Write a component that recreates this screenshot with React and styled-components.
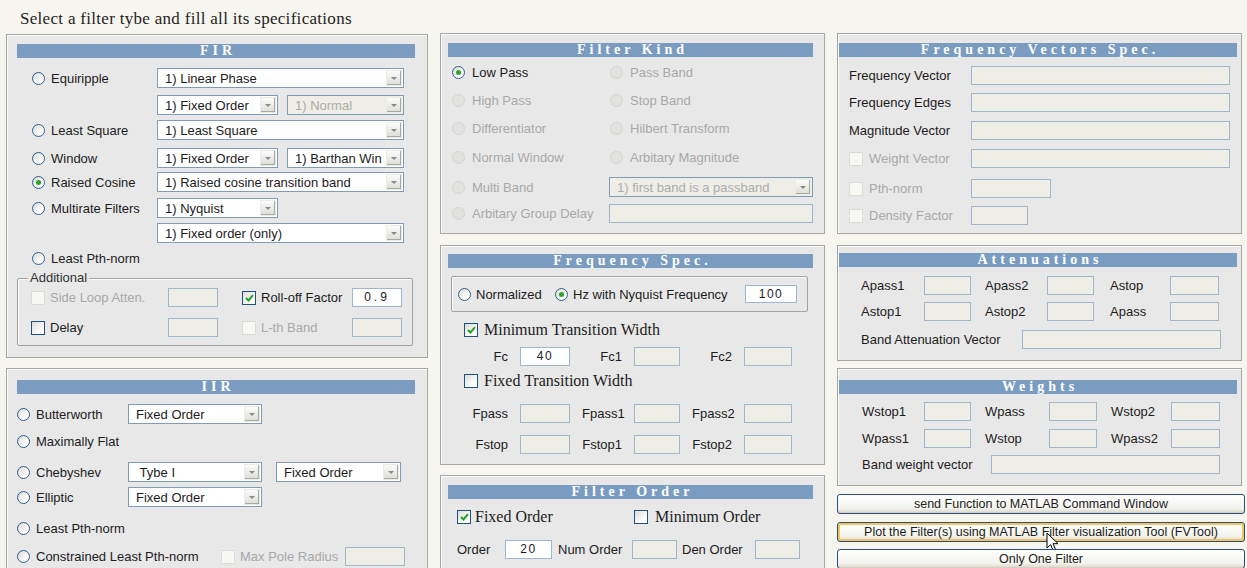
import React from "react";
import styled, { createGlobalStyle } from "styled-components";

const GlobalStyle = createGlobalStyle`
  html, body {
    margin: 0;
    padding: 0;
    background: #f7f5ef;
  }
  body {
    font-family: "Liberation Sans", Arial, sans-serif;
    font-size: 13px;
    color: #1c1c1c;
    overflow: hidden;
  }
  * {
    box-sizing: border-box;
  }
`;

const Page = styled.div`
  width: 1247px;
  height: 568px;
  padding-left: 6px;
  overflow: hidden;
`;

const Title = styled.h1`
  margin: 0;
  height: 33px;
  padding: 9px 0 0 14px;
  font: normal 17px/19px "Liberation Serif", "Times New Roman", serif;
  letter-spacing: 0.3px;
  color: #1e1e1e;
`;

const Columns = styled.div`
  display: grid;
  grid-template-columns: 422px 385px 408px;
  column-gap: 12px;
  align-items: start;
`;

const Column = styled.div`
  display: flex;
  flex-direction: column;
`;

const Panel = styled.section`
  flex: none;
  width: ${(p) => p.$w || "100%"};
  height: ${(p) => p.$h}px;
  margin-top: ${(p) => p.$mt || 0}px;
  padding: ${(p) => p.$pad};
  background: #e8e8e8;
  border: 1px solid #a6a6a6;
  box-shadow: inset 1px 1px 0 #fbfbfb;
  display: flex;
  flex-direction: column;
`;

const Header = styled.h2`
  flex: none;
  margin: 0;
  height: 14px;
  background: #7b9cc1;
  color: #fff;
  font: bold 14px/14px "Liberation Serif", "Times New Roman", serif;
  letter-spacing: 4px;
  padding-left: 4px;
  text-align: center;
  white-space: nowrap;
  overflow: hidden;
`;

const Row = styled.div`
  flex: none;
  display: flex;
  align-items: center;
  height: ${(p) => p.$h || 20}px;
  margin-top: ${(p) => p.$mt || 0}px;
  margin-left: ${(p) => p.$ml || 0}px;
`;

const Cell = styled.div`
  flex: none;
  display: flex;
  align-items: center;
  gap: ${(p) => p.$gap ?? 6}px;
  width: ${(p) => (p.$w ? `${p.$w}px` : "auto")};
  padding-left: ${(p) => p.$pl || 0}px;
`;

const FieldGrid = styled.div`
  flex: none;
  display: grid;
  grid-template-columns: 60px 50px 40px 46px 40px 48px;
  column-gap: 12px;
  align-items: center;
  height: 19px;
  margin-top: ${(p) => p.$mt || 0}px;
`;

const Label = styled.span`
  white-space: nowrap;
  color: ${(p) => (p.$off ? "#a9a9a9" : "#1c1c1c")};
  text-align: ${(p) => (p.$end ? "right" : "left")};
  font-family: ${(p) =>
    p.$serif ? '"Liberation Serif", "Times New Roman", serif' : "inherit"};
  font-size: ${(p) => (p.$serif ? "16px" : "inherit")};
`;

const Radio = styled.span`
  flex: none;
  width: 13px;
  height: 13px;
  border-radius: 50%;
  border: 1px solid ${(p) => (p.$off ? "#d3d3cf" : "#2f5f92")};
  background: ${(p) =>
    p.$off ? "#e2e2e0" : "linear-gradient(135deg, #d8d8d2, #ffffff 70%)"};
  display: flex;
  align-items: center;
  justify-content: center;

  &::after {
    content: "";
    width: 5px;
    height: 5px;
    border-radius: 50%;
    background: ${(p) => (p.$on ? "#2aa52a" : "transparent")};
  }
`;

const Box = styled.span`
  flex: none;
  width: 14px;
  height: 14px;
  border: 1px solid ${(p) => (p.$off ? "#dcdcd6" : "#1c5180")};
  background: ${(p) =>
    p.$off ? "#f7f7f4" : "linear-gradient(135deg, #dcdcd7, #ffffff 75%)"};
  display: flex;
  align-items: center;
  justify-content: center;
`;

const Select = styled.div`
  flex: none;
  width: ${(p) => p.$w}px;
  height: 20px;
  margin-left: ${(p) => p.$ml || 0}px;
  display: flex;
  align-items: center;
  border: 1px solid #7f9db9;
  background: ${(p) => (p.$off ? "#eeede6" : "#fff")};
  color: ${(p) => (p.$off ? "#acacac" : "#1c1c1c")};
  padding: 1px 1px 1px 7px;
`;

const SelectText = styled.span`
  flex: 1;
  white-space: nowrap;
  overflow: hidden;
`;

const SelectArrow = styled.span`
  flex: none;
  width: 16px;
  height: 100%;
  display: flex;
  align-items: center;
  justify-content: center;
  background: linear-gradient(#fbfbf9, #deded7);
  border: 1px solid #ecece7;
  box-shadow: inset -1px -1px 0 #a9a9a3;

  &::after {
    content: "";
    border: 3px solid transparent;
    border-top-color: #8a8a8a;
    border-bottom: 0;
  }
`;

const Field = styled.div`
  flex: none;
  width: ${(p) => p.$w}px;
  height: ${(p) => p.$h || 19}px;
  margin-left: ${(p) => p.$ml || 0}px;
  border: 1px solid #9fb5d0;
  background: ${(p) => (p.$on ? "#fff" : "#eeede6")};
  font-size: 12px;
  line-height: 17px;
  text-align: center;
  letter-spacing: ${(p) => p.$ls ?? 1.5}px;
  color: #1c1c1c;
`;

const Group = styled.div`
  flex: none;
  width: ${(p) => p.$w}px;
  height: ${(p) => p.$h}px;
  margin-top: ${(p) => p.$mt || 0}px;
  margin-left: ${(p) => p.$ml || 0}px;
  border: 1px solid #a2a2a2;
  border-radius: 2px;
  box-shadow: inset 1px 1px 0 #fafafa;
  display: flex;
  flex-direction: column;
`;

const Legend = styled.span`
  align-self: flex-start;
  margin: -9px 0 0 10px;
  padding: 0 2px;
  background: #e8e8e8;
  line-height: 16px;
  color: #333;
`;

const Button = styled.button`
  position: relative;
  flex: none;
  display: block;
  width: 100%;
  height: 20px;
  margin-top: ${(p) => p.$mt || 0}px;
  padding: 0;
  border: 1px solid #2a4f7c;
  border-radius: 3px;
  background: linear-gradient(#ffffff, #f2f2ec 75%, #d9d4c8);
  box-shadow: ${(p) =>
    p.$hot ? "inset 0 0 0 2px #f4c35a" : "inset 0 -1px 0 #d6d0c5"};
  font: 12.5px "Liberation Sans", Arial, sans-serif;
  color: #1c1c1c;
`;

const Pointer = styled.svg`
  position: absolute;
  left: 208px;
  top: 9px;
`;

function Tick({ on, off }) {
  return (
    <Box $off={off}>
      {on && (
        <svg width="9" height="8" viewBox="0 0 9 8">
          <path d="M1 4l2.5 2.5L8 1.2" fill="none" stroke="#21a121" strokeWidth="2" />
        </svg>
      )}
    </Box>
  );
}

function Opt({ w, pl, gap, on, off, children }) {
  return (
    <Cell $w={w} $pl={pl} $gap={gap ?? 6}>
      <Radio $on={on} $off={off} />
      <Label $off={off}>{children}</Label>
    </Cell>
  );
}

function CheckOpt({ w, pl, gap, on, off, serif, children }) {
  return (
    <Cell $w={w} $pl={pl} $gap={gap ?? 5}>
      <Tick on={on} off={off} />
      <Label $off={off} $serif={serif}>
        {children}
      </Label>
    </Cell>
  );
}

function Drop({ w, ml, off, children }) {
  return (
    <Select $w={w} $ml={ml} $off={off}>
      <SelectText>{children}</SelectText>
      <SelectArrow />
    </Select>
  );
}

function Text({ w, pl, off, children }) {
  return (
    <Cell $w={w} $pl={pl}>
      <Label $off={off}>{children}</Label>
    </Cell>
  );
}

function FirPanel() {
  return (
    <Panel $h={324} $mt={1} $pad="9px 12px 0 10px">
      <Header>FIR</Header>
      <Row $mt={10}>
        <Opt w={140} pl={15}>Equiripple</Opt>
        <Drop w={247}>1) Linear Phase</Drop>
      </Row>
      <Row $mt={7}>
        <Cell $w={140} />
        <Drop w={121}>1) Fixed Order</Drop>
        <Drop w={117} ml={9} off>
          1) Normal
        </Drop>
      </Row>
      <Row $mt={5}>
        <Opt w={140} pl={15}>Least Square</Opt>
        <Drop w={247}>1) Least Square</Drop>
      </Row>
      <Row $mt={8}>
        <Opt w={140} pl={15}>Window</Opt>
        <Drop w={121}>1) Fixed Order</Drop>
        <Drop w={117} ml={9}>
          1) Barthan Win
        </Drop>
      </Row>
      <Row $mt={4}>
        <Opt w={140} pl={15} on>
          Raised Cosine
        </Opt>
        <Drop w={247}>1) Raised cosine transition band</Drop>
      </Row>
      <Row $mt={6}>
        <Opt w={140} pl={15}>Multirate Filters</Opt>
        <Drop w={121}>1) Nyquist</Drop>
      </Row>
      <Row $mt={5}>
        <Cell $w={140} />
        <Drop w={247}>1) Fixed order (only)</Drop>
      </Row>
      <Row $mt={5}>
        <Opt w={140} pl={15}>Least Pth-norm</Opt>
      </Row>
      <Group $w={396} $h={68} $mt={10}>
        <Legend>Additional</Legend>
        <Row $h={19} $mt={2}>
          <CheckOpt w={150} pl={13} off>
            Side Loop Atten.
          </CheckOpt>
          <Field $w={50} />
          <CheckOpt w={134} pl={24} on>
            Roll-off Factor
          </CheckOpt>
          <Field $w={50} $on $ls={3}>
            0.9
          </Field>
        </Row>
        <Row $h={19} $mt={11}>
          <CheckOpt w={150} pl={13}>
            Delay
          </CheckOpt>
          <Field $w={50} />
          <CheckOpt w={134} pl={24} off>
            L-th Band
          </CheckOpt>
          <Field $w={50} />
        </Row>
      </Group>
    </Panel>
  );
}

function IirPanel() {
  return (
    <Panel $h={210} $mt={10} $pad="11px 12px 0 10px">
      <Header>IIR</Header>
      <Row $mt={10}>
        <Opt w={111}>Butterworth</Opt>
        <Drop w={134}>Fixed Order</Drop>
      </Row>
      <Row $mt={7}>
        <Opt w={111}>Maximally Flat</Opt>
      </Row>
      <Row $mt={11}>
        <Opt w={111}>Chebyshev</Opt>
        <Drop w={134}>&nbsp;Tybe I</Drop>
        <Drop w={125} ml={14}>
          Fixed Order
        </Drop>
      </Row>
      <Row $mt={5}>
        <Opt w={111}>Elliptic</Opt>
        <Drop w={134}>Fixed Order</Drop>
      </Row>
      <Row $mt={11}>
        <Opt w={111}>Least Pth-norm</Opt>
      </Row>
      <Row $mt={9} $h={19}>
        <Opt w={204}>Constrained Least Pth-norm</Opt>
        <CheckOpt w={124} off>
          Max Pole Radius
        </CheckOpt>
        <Field $w={60} />
      </Row>
    </Panel>
  );
}

function KindPanel() {
  return (
    <Panel $h={201} $pad="9px 11px 0 7px">
      <Header>Filter Kind</Header>
      <Row $mt={5}>
        <Opt w={162} pl={4} gap={7} on>
          Low Pass
        </Opt>
        <Opt gap={7} off>
          Pass Band
        </Opt>
      </Row>
      <Row $mt={8}>
        <Opt w={162} pl={4} gap={7} off>
          High Pass
        </Opt>
        <Opt gap={7} off>
          Stop Band
        </Opt>
      </Row>
      <Row $mt={8}>
        <Opt w={162} pl={4} gap={7} off>
          Differentiator
        </Opt>
        <Opt gap={7} off>
          Hilbert Transform
        </Opt>
      </Row>
      <Row $mt={9}>
        <Opt w={162} pl={4} gap={7} off>
          Normal Window
        </Opt>
        <Opt gap={7} off>
          Arbitary Magnitude
        </Opt>
      </Row>
      <Row $mt={10}>
        <Opt w={161} pl={4} gap={7} off>
          Multi Band
        </Opt>
        <Drop w={204} off>
          1) first band is a passband
        </Drop>
      </Row>
      <Row $mt={7} $h={19}>
        <Opt w={161} pl={4} gap={7} off>
          Arbitary Group Delay
        </Opt>
        <Field $w={204} />
      </Row>
    </Panel>
  );
}

function FreqRow({ mt, names, first }) {
  return (
    <FieldGrid $mt={mt}>
      {names.map((n, i) => (
        <React.Fragment key={n}>
          <Label $end>{n}</Label>
          {i === 0 && first ? (
            <Field $w={50} $on>
              {first}
            </Field>
          ) : (
            <Field $w={i === 0 ? 50 : i === 1 ? 46 : 48} />
          )}
        </React.Fragment>
      ))}
    </FieldGrid>
  );
}

function SpecPanel() {
  return (
    <Panel $h={220} $mt={11} $pad="8px 11px 0 7px">
      <Header>Frequency Spec.</Header>
      <Group $w={357} $h={36} $mt={8} $ml={3}>
        <Row $h={34}>
          <Opt w={101} pl={6} gap={5}>
            Normalized
          </Opt>
          <Opt w={192} pl={2} gap={5} on>
            Hz with Nyquist Frequency
          </Opt>
          <Field $w={52} $h={18} $on>
            100
          </Field>
        </Row>
      </Group>
      <Row $mt={8}>
        <CheckOpt pl={16} gap={6} on serif>
          Minimum Transition Width
        </CheckOpt>
      </Row>
      <FreqRow mt={7} names={["Fc", "Fc1", "Fc2"]} first="40" />
      <Row $mt={5}>
        <CheckOpt pl={16} gap={6} serif>
          Fixed Transition Width
        </CheckOpt>
      </Row>
      <FreqRow mt={13} names={["Fpass", "Fpass1", "Fpass2"]} />
      <FreqRow mt={12} names={["Fstop", "Fstop1", "Fstop2"]} />
    </Panel>
  );
}

function OrderPanel() {
  return (
    <Panel $h={100} $mt={10} $pad="9px 11px 0 7px">
      <Header>Filter Order</Header>
      <Row $mt={8}>
        <CheckOpt w={186} pl={9} gap={4} on serif>
          Fixed Order
        </CheckOpt>
        <CheckOpt gap={7} serif>
          Minimum Order
        </CheckOpt>
      </Row>
      <Row $mt={13} $h={19}>
        <Text w={57} pl={9}>
          Order
        </Text>
        <Field $w={47} $on>
          20
        </Field>
        <Text w={80} pl={6}>
          Num Order
        </Text>
        <Field $w={45} />
        <Text w={78} pl={5}>
          Den Order
        </Text>
        <Field $w={45} />
      </Row>
    </Panel>
  );
}

function VectorPanel() {
  return (
    <Panel $w="405px" $h={201} $pad="9px 4px 0 1px">
      <Header>Frequency Vectors Spec.</Header>
      <Row $mt={9} $h={19}>
        <Text w={132} pl={10}>
          Frequency Vector
        </Text>
        <Field $w={259} />
      </Row>
      <Row $mt={8} $h={19}>
        <Text w={132} pl={10}>
          Frequency Edges
        </Text>
        <Field $w={259} />
      </Row>
      <Row $mt={9} $h={19}>
        <Text w={132} pl={10}>
          Magnitude Vector
        </Text>
        <Field $w={259} />
      </Row>
      <Row $mt={9} $h={19}>
        <CheckOpt w={132} pl={10} gap={6} off>
          Weight Vector
        </CheckOpt>
        <Field $w={259} />
      </Row>
      <Row $mt={11} $h={19}>
        <CheckOpt w={132} pl={10} gap={6} off>
          Pth-norm
        </CheckOpt>
        <Field $w={80} />
      </Row>
      <Row $mt={8} $h={19}>
        <CheckOpt w={132} pl={10} gap={6} off>
          Density Factor
        </CheckOpt>
        <Field $w={57} />
      </Row>
    </Panel>
  );
}

function TripleRow({ mt, names, cells, fields }) {
  return (
    <Row $mt={mt} $h={19}>
      {names.map((n, i) => (
        <React.Fragment key={n}>
          <Text w={cells[i][0]} pl={cells[i][1]}>
            {n}
          </Text>
          <Field $w={fields[i]} />
        </React.Fragment>
      ))}
    </Row>
  );
}

function AttenPanel() {
  const cells = [
    [85, 22],
    [76, 14],
    [76, 16],
  ];
  return (
    <Panel $w="405px" $h={116} $mt={11} $pad="7px 4px 0 1px">
      <Header>Attenuations</Header>
      <TripleRow mt={9} names={["Apass1", "Apass2", "Astop"]} cells={cells} fields={[47, 47, 49]} />
      <TripleRow mt={7} names={["Astop1", "Astop2", "Apass"]} cells={cells} fields={[47, 47, 49]} />
      <Row $mt={9} $h={19}>
        <Text w={183} pl={22}>
          Band Attenuation Vector
        </Text>
        <Field $w={199} />
      </Row>
    </Panel>
  );
}

function WeightPanel() {
  const cells = [
    [85, 23],
    [78, 14],
    [74, 14],
  ];
  return (
    <Panel $w="405px" $h={118} $mt={7} $pad="11px 4px 0 1px">
      <Header>Weights</Header>
      <TripleRow mt={8} names={["Wstop1", "Wpass", "Wstop2"]} cells={cells} fields={[47, 48, 49]} />
      <TripleRow mt={8} names={["Wpass1", "Wstop", "Wpass2"]} cells={cells} fields={[47, 48, 49]} />
      <Row $mt={7} $h={19}>
        <Text w={152} pl={23}>
          Band weight vector
        </Text>
        <Field $w={229} />
      </Row>
    </Panel>
  );
}

export default function App() {
  return (
    <Page>
      <GlobalStyle />
      <Title>Select a filter tybe and fill all its specifications</Title>
      <Columns>
        <Column>
          <FirPanel />
          <IirPanel />
        </Column>
        <Column>
          <KindPanel />
          <SpecPanel />
          <OrderPanel />
        </Column>
        <Column>
          <VectorPanel />
          <AttenPanel />
          <WeightPanel />
          <Button $mt={8}>send Function to MATLAB Command Window</Button>
          <Button $mt={8} $hot>
            Plot the Filter(s) using MATLAB Filter visualization Tool (FVTool)
            <Pointer width="13" height="20" viewBox="0 0 13 20">
              <path
                d="M1 1v15l3.6-3.4 2.5 5.8 2.4-1-2.5-5.7H12z"
                fill="#fff"
                stroke="#000"
                strokeWidth="1"
                strokeLinejoin="round"
              />
            </Pointer>
          </Button>
          <Button $mt={7}>Only One Filter</Button>
        </Column>
      </Columns>
    </Page>
  );
}
